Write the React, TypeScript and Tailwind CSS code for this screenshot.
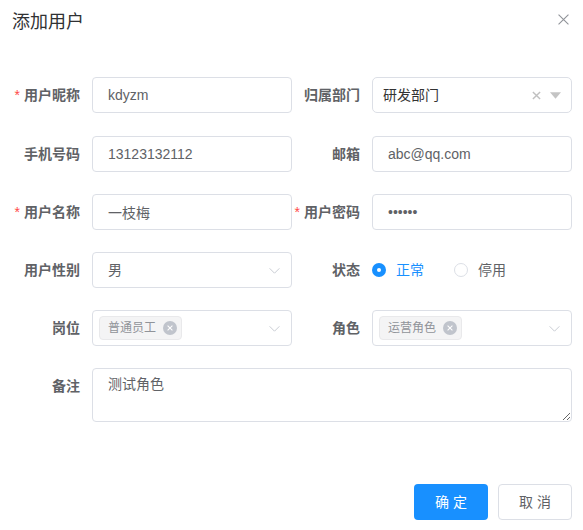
import React from 'react';

const Label = ({ text, required }: { text: string; required?: boolean }) => (
  <label className="w-[80px] shrink-0 pr-3 text-right text-sm font-bold text-[#606266] leading-[36px]">
    {required && <span className="text-[#ff4949] font-normal mr-1">*</span>}
    {text}
  </label>
);

const TextInput = ({ value, type = 'text' }: { value: string; type?: string }) => (
  <input
    readOnly
    type={type}
    value={value}
    className="w-[200px] h-9 rounded border border-[#dcdfe6] px-[15px] text-sm text-[#606266] outline-none bg-white"
  />
);

const Chevron = () => (
  <svg width="13" height="13" viewBox="0 0 24 24" fill="none" stroke="#c0c4cc" strokeWidth="1.6">
    <path d="M3 8l9 9 9-9" />
  </svg>
);

const Tag = ({ text }: { text: string }) => (
  <span className="flex items-center h-6 rounded border border-[#e9e9eb] bg-[#f4f4f5] pl-2 pr-[4px] text-xs text-[#909399]">
    {text}
    <span className="ml-[7px] flex h-[14px] w-[14px] items-center justify-center rounded-full bg-[#c0c4cc]">
      <svg width="8" height="8" viewBox="0 0 10 10" stroke="#fff" strokeWidth="1.3">
        <path d="M2 2l6 6M8 2l-6 6" />
      </svg>
    </span>
  </span>
);

const TagSelect = ({ tag }: { tag: string }) => (
  <div className="w-[200px] h-9 rounded border border-[#dcdfe6] bg-white flex items-center pl-[6px] pr-[10px]">
    <Tag text={tag} />
    <div className="ml-auto">
      <Chevron />
    </div>
  </div>
);

const Field = ({ children }: { children: React.ReactNode }) => (
  <div className="flex w-[280px] items-center">{children}</div>
);

export default function App() {
  return (
    <div className="w-[583px] h-[530px] bg-white relative font-['Liberation_Sans','Noto_Sans_CJK_SC',sans-serif]">
      {/* header */}
      <div className="flex items-center justify-between pl-3 pr-[14px] pt-[10px]">
        <span className="text-lg leading-6 text-[#303133]">添加用户</span>
        <svg width="11" height="11" viewBox="0 0 10 10" stroke="#909399" strokeWidth="1" className="-mt-[6px]">
          <path d="M0.5 0.5l9 9M9.5 0.5l-9 9" />
        </svg>
      </div>

      {/* form */}
      <div className="pl-3 pt-[43px]">
        <div className="flex mb-[23px]">
          <Field>
            <Label text="用户昵称" required />
            <TextInput value="kdyzm" />
          </Field>
          <Field>
            <Label text="归属部门" />
            <div className="w-[200px] h-9 rounded-[5px] border border-[#dcdfe6] bg-white flex items-center pl-[10px] pr-[10px]">
              <span className="text-sm text-[#333]">研发部门</span>
              <svg width="9" height="9" viewBox="0 0 10 10" stroke="#c0c0c0" strokeWidth="1.6" className="ml-auto">
                <path d="M1 1l8 8M9 1l-8 8" />
              </svg>
              <svg width="11" height="7" viewBox="0 0 10 6" className="ml-[9px]">
                <path d="M0 0h10L5 6z" fill="#c4c4c4" />
              </svg>
            </div>
          </Field>
        </div>

        <div className="flex mb-[22px]">
          <Field>
            <Label text="手机号码" />
            <TextInput value="13123132112" />
          </Field>
          <Field>
            <Label text="邮箱" />
            <TextInput value="abc@qq.com" />
          </Field>
        </div>

        <div className="flex mb-[22px]">
          <Field>
            <Label text="用户名称" required />
            <TextInput value="一枝梅" />
          </Field>
          <Field>
            <Label text="用户密码" required />
            <TextInput type="password" value="123456" />
          </Field>
        </div>

        <div className="flex mb-[22px]">
          <Field>
            <Label text="用户性别" />
            <div className="w-[200px] h-9 rounded border border-[#dcdfe6] bg-white flex items-center pl-[15px] pr-[10px]">
              <span className="text-sm text-[#606266]">男</span>
              <div className="ml-auto">
                <Chevron />
              </div>
            </div>
          </Field>
          <Field>
            <Label text="状态" />
            <div className="flex items-center text-sm">
              <span className="flex h-[14px] w-[14px] items-center justify-center rounded-full bg-[#1890ff]">
                <span className="h-1 w-1 rounded-full bg-white" />
              </span>
              <span className="ml-[10px] text-[#1890ff]">正常</span>
              <span className="ml-[30px] h-[14px] w-[14px] rounded-full border border-[#dcdfe6] bg-white" />
              <span className="ml-[10px] text-[#606266]">停用</span>
            </div>
          </Field>
        </div>

        <div className="flex mb-[22px]">
          <Field>
            <Label text="岗位" />
            <TagSelect tag="普通员工" />
          </Field>
          <Field>
            <Label text="角色" />
            <TagSelect tag="运营角色" />
          </Field>
        </div>

        <div className="flex">
          <Label text="备注" />
          <textarea
            readOnly
            value="测试角色"
            className="w-[480px] h-[54px] rounded border border-[#dcdfe6] px-[15px] py-[5px] text-sm leading-[21px] text-[#606266] outline-none"
          />
        </div>
      </div>

      {/* footer */}
      <div className="flex justify-end gap-[10px] pr-[11px] pt-[62px]">
        <button className="h-9 w-[74px] rounded bg-[#1890ff] text-sm text-white">确 定</button>
        <button className="h-9 w-[74px] rounded border border-[#dcdfe6] bg-white text-sm text-[#606266]">取 消</button>
      </div>
    </div>
  );
}
